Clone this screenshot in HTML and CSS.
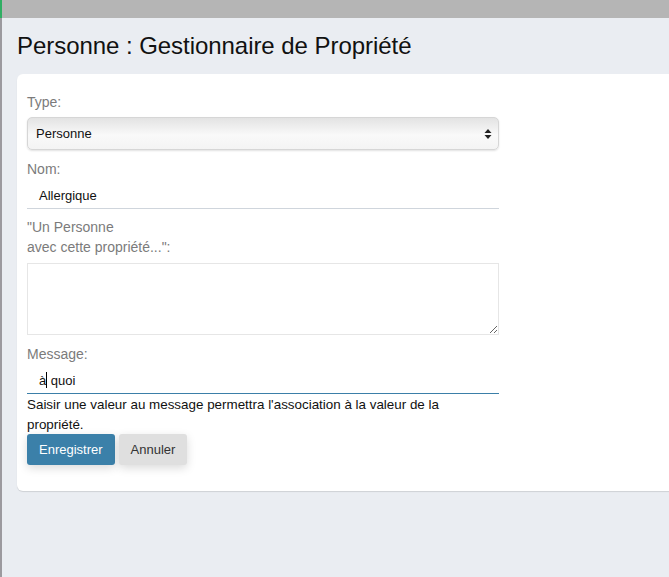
FILE: index.html
```html
<!DOCTYPE html>
<html lang="fr">
<head>
<meta charset="utf-8">
<title>Personne : Gestionnaire de Propriété</title>
<link rel="stylesheet" href="styles.css">
</head>
<body>
<div class="topbar"></div>
<main class="main">
  <h1 class="title">Personne : Gestionnaire de Propriété</h1>
  <section class="card">
    <form class="form">
      <label class="label">Type:</label>
      <div class="select">
        <span>Personne</span>
        <svg class="arrows" width="8" height="12" viewBox="0 0 8 12"><path d="M4 1 L7.5 5 L0.5 5 Z M4 11 L7.5 7 L0.5 7 Z" fill="#222"/></svg>
      </div>
      <label class="label">Nom:</label>
      <div class="field">Allergique</div>
      <label class="label">"Un Personne<br>avec cette propriété...":</label>
      <textarea class="textarea"></textarea>
      <label class="label">Message:</label>
      <div class="field focused">à<span class="caret"></span> quoi</div>
      <p class="help">Saisir une valeur au message permettra l'association à la valeur de la propriété.</p>
      <div class="actions">
        <button type="button" class="btn primary">Enregistrer</button>
        <button type="button" class="btn secondary">Annuler</button>
      </div>
    </form>
  </section>
</main>
</body>
</html>
```

FILE: styles.css
```css
html, body {
  margin: 0;
  padding: 0;
  height: 100%;
  overflow: hidden;
}
body {
  font-family: "Liberation Sans", Arial, sans-serif;
  background: #eaedf2;
  color: #222;
}
.topbar {
  height: 18px;
  background: #b5b5b5;
  border-left: 2px solid #2fae63;
}
.main {
  border-left: 2px solid #9c9a9f;
  padding: 0 0 0 15px;
  min-height: calc(100% - 18px);
  box-sizing: border-box;
}
.title {
  margin: 0;
  padding: 13px 0 0 0;
  height: 43px;
  box-sizing: content-box;
  font-size: 24px;
  font-weight: normal;
  line-height: 30px;
  color: #111;
  letter-spacing: -0.05px;
}
.card {
  background: #fff;
  border-radius: 6px 0 0 6px;
  margin-right: -10px;
  padding: 18px 10px 26px 10px;
  box-shadow: 0 1px 1px rgba(0,0,0,0.12);
}
.form {
  width: 472px;
  display: flex;
  flex-direction: column;
  font-size: 13px;
}
.label {
  color: #7b7b7b;
  font-size: 14px;
  line-height: 20px;
}
.select {
  margin-top: 5px;
  height: 33px;
  box-sizing: border-box;
  border: 1px solid #d6d6d6;
  border-radius: 5px;
  background: linear-gradient(#e3e3e3, #f9f9f9 55%, #f4f4f4);
  box-shadow: 0 1px 2px rgba(0,0,0,0.12);
  display: flex;
  align-items: center;
  justify-content: space-between;
  padding: 0 6px 0 8px;
  color: #111;
  margin-bottom: 9px;
}
.arrows { display: block; }
.field {
  height: 28px;
  box-sizing: border-box;
  padding: 0 12px;
  line-height: 29px;
  border-bottom: 1px solid #cfd5dc;
  color: #111;
  margin-top: 2px;
  margin-bottom: 8px;
}
.field.focused {
  border-bottom-color: #3b7fa8;
  margin-bottom: 1px;
}
.caret {
  display: inline-block;
  width: 1px;
  height: 16px;
  background: #000;
  vertical-align: -3px;
}
.textarea {
  margin-top: 6px;
  height: 72px;
  box-sizing: border-box;
  border: 1px solid #e6e6e6;
  border-radius: 0;
  resize: vertical;
  font-family: inherit;
  margin-bottom: 9px;
  outline: none;
}
.help {
  margin: 0;
  max-width: 455px;
  font-size: 13.4px;
  line-height: 19.5px;
  color: #111;
}
.actions {
  display: flex;
  gap: 4px;
}
.btn {
  height: 31px;
  border: none;
  border-radius: 3px;
  font-family: inherit;
  font-size: 13px;
  padding: 0 12px;
  box-shadow: 0 3px 10px rgba(0,0,0,0.15);
}
.primary {
  background: #3b80a9;
  color: #fff;
}
.secondary {
  background: #dfdfdf;
  color: #333;
}
```
